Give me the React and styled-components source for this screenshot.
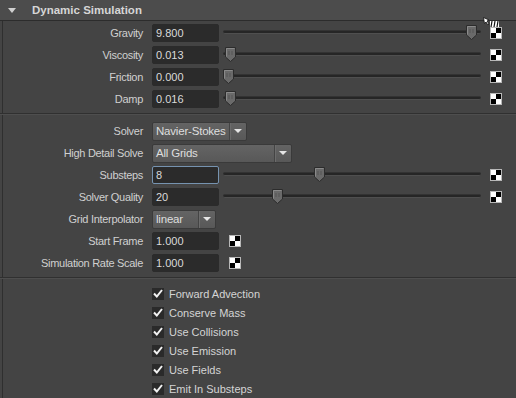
import React from 'react';
import styled, { createGlobalStyle } from 'styled-components';

const GlobalStyle = createGlobalStyle`
  html, body {
    margin: 0;
    padding: 0;
    background: #444444;
  }
  body {
    font-family: 'Liberation Sans', Arial, sans-serif;
    font-size: 11px;
    color: #cfcfcf;
  }
`;

const Panel = styled.div`
  position: relative;
  width: 516px;
  height: 398px;
  overflow: hidden;
  background: #444444;
`;

const Header = styled.div`
  height: 20px;
  display: flex;
  align-items: center;
  padding-left: 8px;
  background: #4c4c4c;
  border-bottom: 1px solid #2c2c2c;
`;

const Triangle = styled.span`
  width: 0;
  height: 0;
  border-left: 4.5px solid transparent;
  border-right: 4.5px solid transparent;
  border-top: 5px solid #d0d0d0;
  margin-right: 16px;
`;

const Title = styled.span`
  font-weight: bold;
  font-size: 11.5px;
  color: #d6d6d6;
`;

const Section = styled.div`
  margin-left: 2px;
  border-left: 1px solid #2f2f2f;
  padding: ${p => p.pad || '0'};
  display: flex;
  flex-direction: column;
`;

const Separator = styled.div`
  height: 1px;
  background: #303030;
  border-bottom: 1px solid #4e4e4e;
`;

const Row = styled.div`
  height: 22px;
  display: flex;
  align-items: center;
`;

const Label = styled.div`
  width: 140px;
  margin-right: 9px;
  text-align: right;
  letter-spacing: -0.3px;
  color: #d0d0d0;
  white-space: nowrap;
`;

const Field = styled.div`
  box-sizing: border-box;
  width: 67px;
  height: 18px;
  display: flex;
  align-items: center;
  padding-left: 3px;
  background: #2b2b2b;
  border: 1px solid ${p => (p.focused ? '#7693b0' : '#2b2b2b')};
  border-radius: 2px;
  color: #dadada;
  font-size: 11px;
`;

const SliderWrap = styled.div`
  position: relative;
  width: 258px;
  height: 22px;
  margin-left: 4px;
  display: flex;
  align-items: center;
`;

const Track = styled.div`
  width: 100%;
  height: 2px;
  margin-top: -2px;
  background: #262626;
  border-top: 1px solid #333;
  border-bottom: 1px solid #4f4f4f;
  border-radius: 2px;
`;

const ThumbBox = styled.svg`
  position: absolute;
  top: 3px;
`;

const Thumb = ({ x }) => (
  <ThumbBox width="11" height="15" viewBox="0 0 11 15" style={{ left: x - 5 }}>
    <polygon points="0.5,0.5 10.5,0.5 10.5,10 5.5,14.5 0.5,10" fill="#6a6a6a" stroke="#2c2c2c" />
    <polyline points="1.5,9.5 1.5,1.5 9.5,1.5" fill="none" stroke="#8a8a8a" />
    <line x1="4" y1="4" x2="4" y2="8" stroke="#555" />
    <line x1="7" y1="4" x2="7" y2="8" stroke="#555" />
  </ThumbBox>
);

const Slider = ({ at }) => (
  <SliderWrap>
    <Track />
    <Thumb x={at - 223} />
  </SliderWrap>
);

const CheckerBox = styled.svg`
  flex: none;
  margin-left: ${p => p.gap}px;
  margin-top: -1px;
`;

const Checker = ({ gap }) => (
  <CheckerBox gap={gap} width="12" height="12" viewBox="0 0 12 12">
    <rect x="0" y="0" width="12" height="12" fill="#b8b8b8" />
    <rect x="1" y="1" width="5" height="5" fill="#ffffff" />
    <rect x="6" y="1" width="5" height="5" fill="#000000" />
    <rect x="1" y="6" width="5" height="5" fill="#000000" />
    <rect x="6" y="6" width="5" height="5" fill="#ffffff" />
  </CheckerBox>
);

const Dropdown = styled.div`
  box-sizing: border-box;
  width: ${p => p.w}px;
  height: 19px;
  display: flex;
  align-items: stretch;
  background: linear-gradient(#646464, #585858);
  border: 1px solid #3a3a3a;
  border-radius: 2px;
  color: #dedede;
  font-size: 11.5px;
`;

const DropText = styled.div`
  flex: 1;
  display: flex;
  align-items: center;
  padding-left: 3px;
  letter-spacing: -0.2px;
`;

const DropArrow = styled.div`
  width: 16px;
  display: flex;
  align-items: center;
  justify-content: center;
  border-left: 1px solid #444;
  box-shadow: inset 1px 0 0 #6c6c6c;
  &::after {
    content: '';
    border-left: 4px solid transparent;
    border-right: 4px solid transparent;
    border-top: 4px solid #e6e6e6;
  }
`;

const CheckRow = styled.div`
  height: 19px;
  display: flex;
  align-items: center;
  padding-left: 149px;
`;

const Box = styled.span`
  box-sizing: border-box;
  width: 12px;
  height: 12px;
  display: flex;
  align-items: center;
  justify-content: center;
  background: #2a2a2a;
  margin-right: 5px;
`;

const CheckText = styled.span`
  color: #d4d4d4;
  font-size: 11px;
`;

const CursorBox = styled.svg`
  position: absolute;
  left: 483px;
  top: 17px;
`;

const sliders = [
  { label: 'Gravity', value: '9.800', at: 471 },
  { label: 'Viscosity', value: '0.013', at: 230 },
  { label: 'Friction', value: '0.000', at: 228 },
  { label: 'Damp', value: '0.016', at: 230 },
];

const checks = [
  'Forward Advection',
  'Conserve Mass',
  'Use Collisions',
  'Use Emission',
  'Use Fields',
  'Emit In Substeps',
];

export default function App() {
  return (
    <>
      <GlobalStyle />
      <Panel>
        <Header>
          <Triangle />
          <Title>Dynamic Simulation</Title>
        </Header>

        <Section pad="1px 0 3px">
          {sliders.map(s => (
            <Row key={s.label}>
              <Label>{s.label}</Label>
              <Field>{s.value}</Field>
              <Slider at={s.at} />
              <Checker gap={9} />
            </Row>
          ))}
        </Section>
        <Separator />

        <Section pad="5px 0 3px">
          <Row>
            <Label>Solver</Label>
            <Dropdown w={95}>
              <DropText>Navier-Stokes</DropText>
              <DropArrow />
            </Dropdown>
          </Row>
          <Row>
            <Label>High Detail Solve</Label>
            <Dropdown w={140}>
              <DropText>All Grids</DropText>
              <DropArrow />
            </Dropdown>
          </Row>
          <Row>
            <Label>Substeps</Label>
            <Field focused>8</Field>
            <Slider at={319} />
            <Checker gap={9} />
          </Row>
          <Row>
            <Label>Solver Quality</Label>
            <Field>20</Field>
            <Slider at={277} />
            <Checker gap={9} />
          </Row>
          <Row>
            <Label>Grid Interpolator</Label>
            <Dropdown w={64}>
              <DropText>linear</DropText>
              <DropArrow />
            </Dropdown>
          </Row>
          <Row>
            <Label>Start Frame</Label>
            <Field>1.000</Field>
            <Checker gap={10} />
          </Row>
          <Row>
            <Label>Simulation Rate Scale</Label>
            <Field>1.000</Field>
            <Checker gap={10} />
          </Row>
        </Section>
        <Separator />

        <Section pad="5px 0 0">
          {checks.map(c => (
            <CheckRow key={c}>
              <Box>
                <svg width="10" height="9" viewBox="0 0 10 9">
                  <path d="M1 4.5 L3.8 7.5 L9 1" fill="none" stroke="#f2f2f2" strokeWidth="2" />
                </svg>
              </Box>
              <CheckText>{c}</CheckText>
            </CheckRow>
          ))}
        </Section>

        <CursorBox width="16" height="10" viewBox="0 0 16 10">
          <polygon points="0.5,0.5 6,3 4,4 6,7 5,8 3,5 1.5,6.5" fill="#fff" stroke="#111" strokeWidth="0.8" />
          <rect x="7" y="4" width="9" height="6" fill="#fff" />
          <line x1="9" y1="4" x2="8" y2="10" stroke="#111" strokeWidth="1.2" />
          <line x1="12" y1="4" x2="11" y2="10" stroke="#111" strokeWidth="1.2" />
          <line x1="15" y1="4" x2="14" y2="10" stroke="#111" strokeWidth="1.2" />
        </CursorBox>
      </Panel>
    </>
  );
}
